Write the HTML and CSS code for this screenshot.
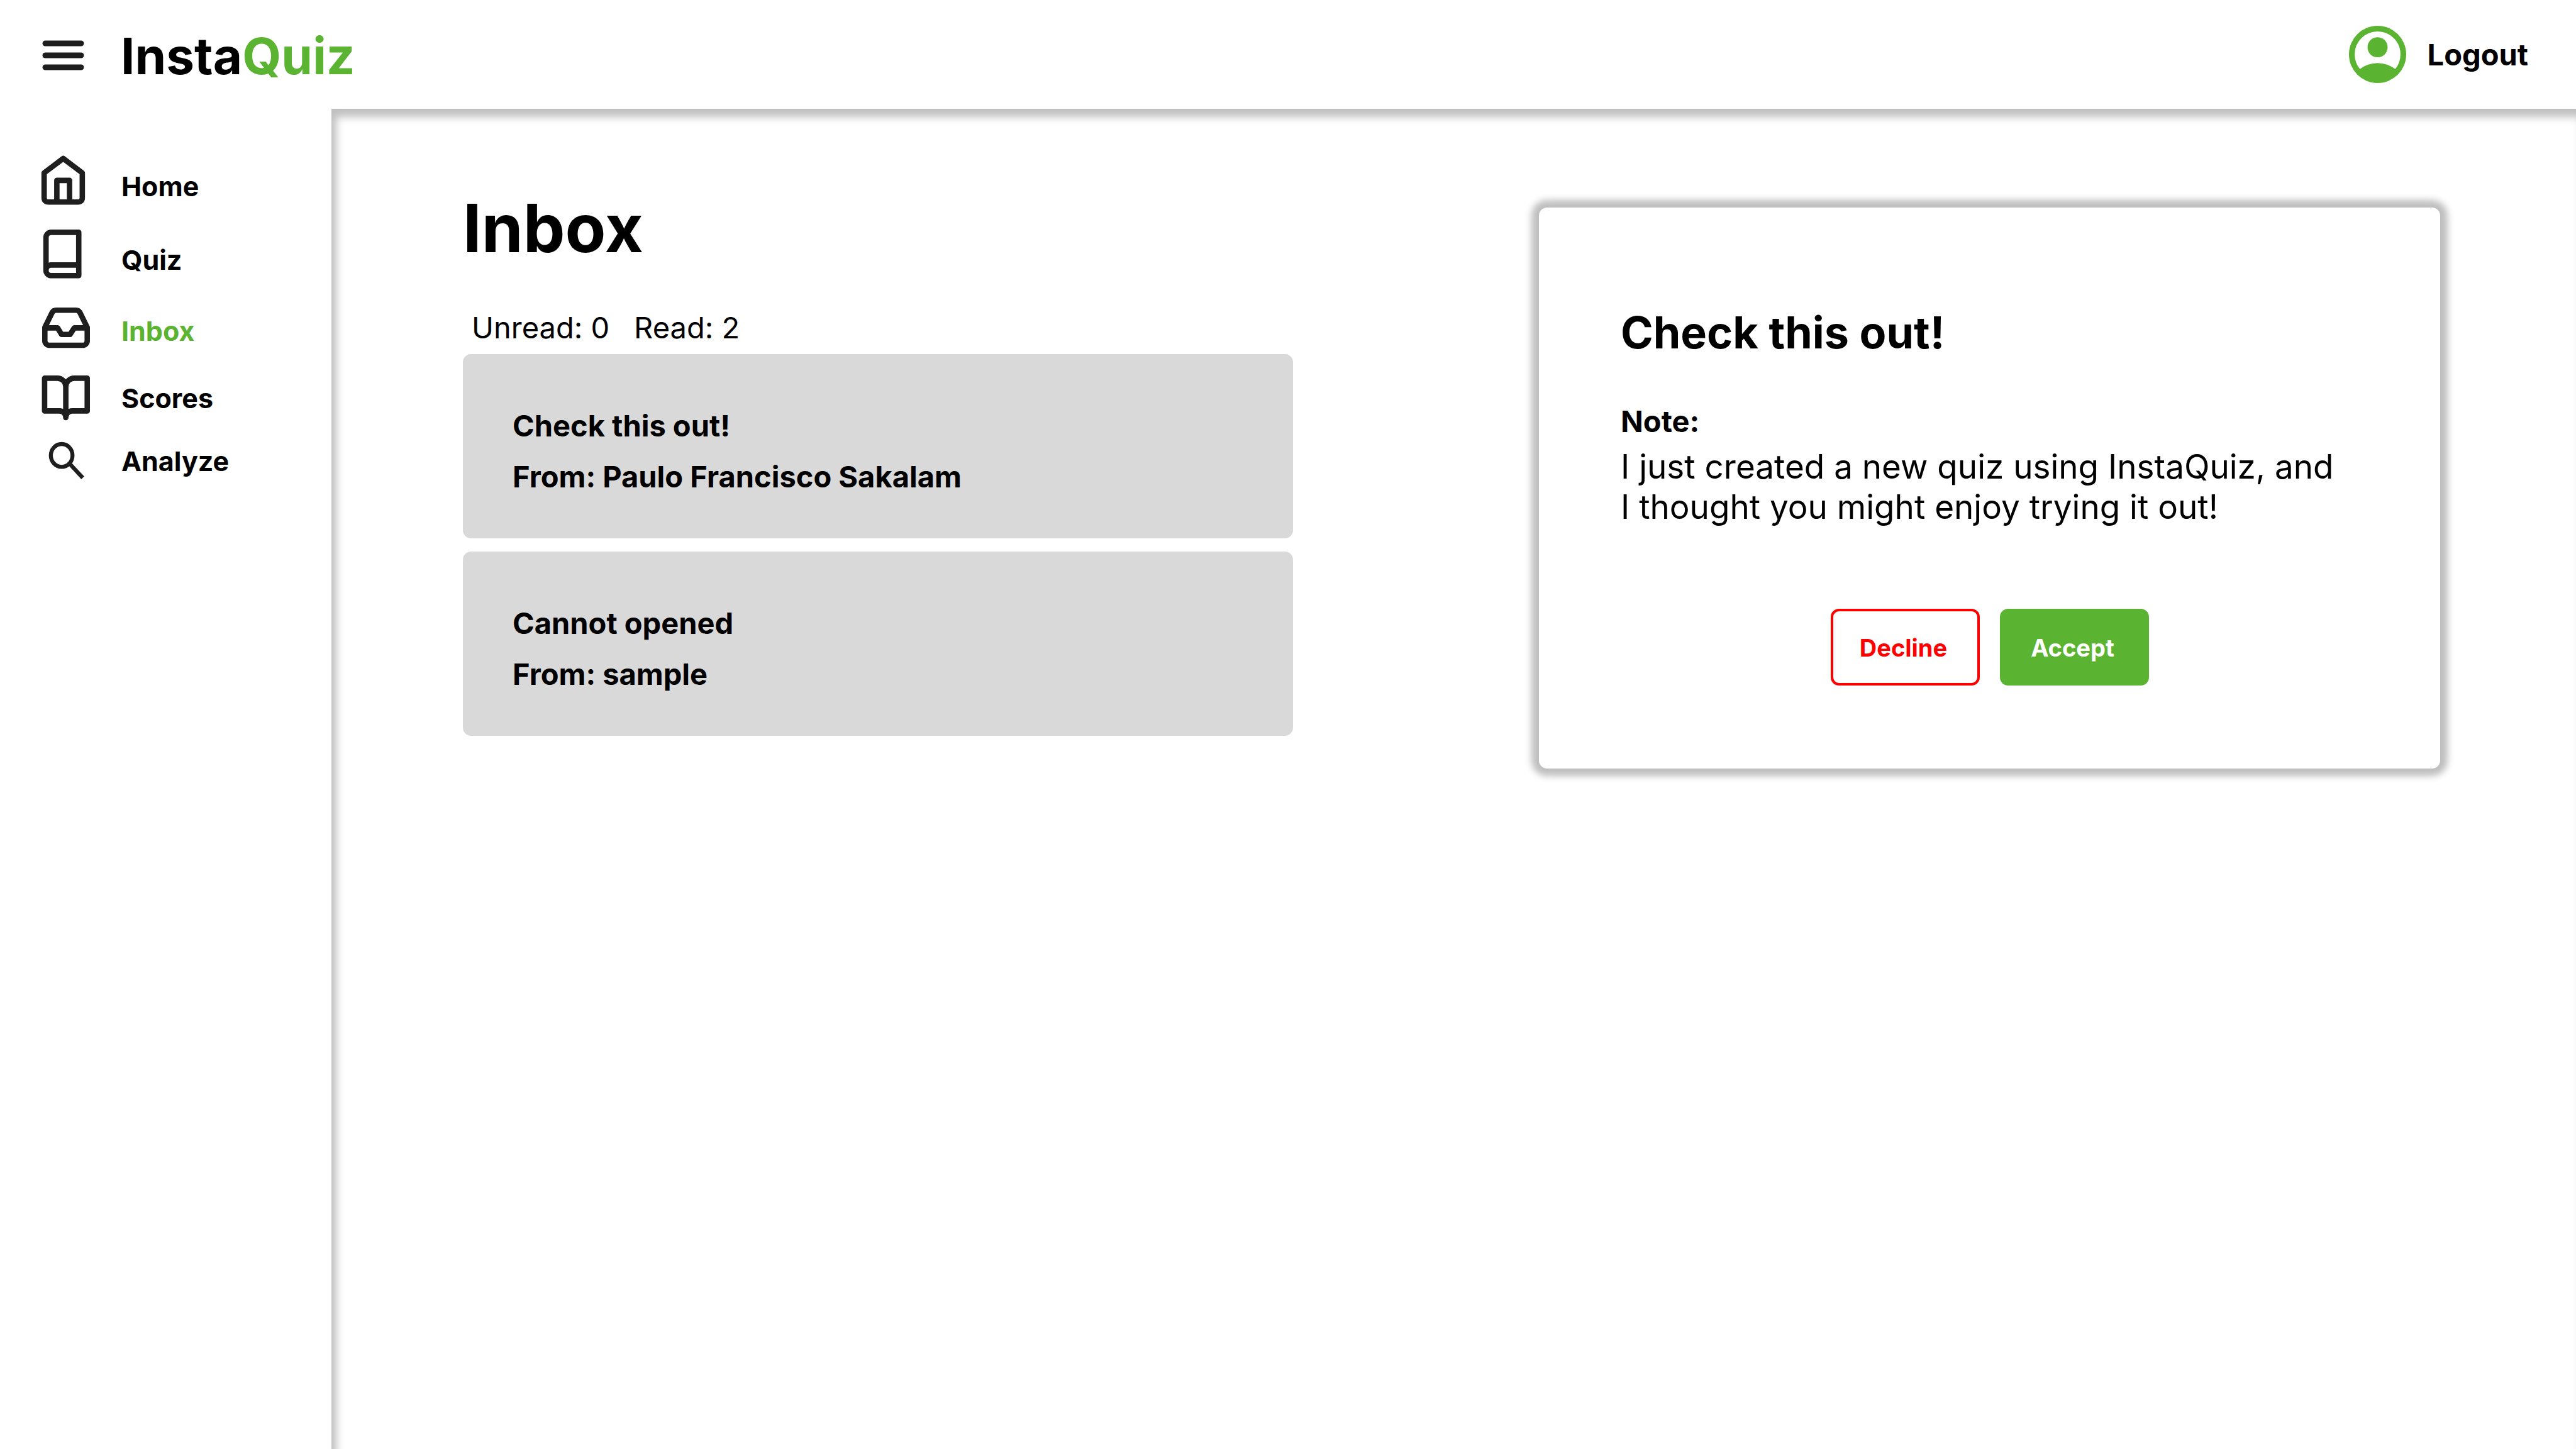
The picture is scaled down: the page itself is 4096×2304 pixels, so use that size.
FILE: index.html
```html
<!DOCTYPE html>
<html lang="en">
<head>
<meta charset="utf-8">
<title>InstaQuiz - Inbox</title>
<link rel="stylesheet" href="styles.css">
</head>
<body>
<div class="app">
  <header class="topbar">
    <button class="menu-button" type="button" aria-label="Menu">
      <svg class="menu-icon" viewBox="0 0 90 90" aria-hidden="true"><path d="M12 27H69M12 46H69M12 65H69"/></svg>
    </button>
    <a class="brand" href="#">Insta<span class="brand-accent">Quiz</span></a>
    <a class="logout" href="#">
      <svg class="avatar" viewBox="2 2 20 20" aria-hidden="true"><path d="M5.85 17.1q1.275-.975 2.85-1.537T12 15t3.3.563 2.85 1.537q.875-1.025 1.363-2.325T20 12q0-3.325-2.337-5.663T12 4T6.337 6.338T4 12q0 1.475.488 2.775T5.85 17.1M12 13q-1.475 0-2.488-1.012T8.5 9.5t1.013-2.488T12 6t2.488 1.013T15.5 9.5t-1.012 2.488T12 13m0 9q-2.075 0-3.9-.788t-3.175-2.137T2.788 15.9T2 12t.788-3.9t2.137-3.175T8.1 2.788T12 2t3.9.788t3.175 2.137T21.213 8.1T22 12t-.788 3.9t-2.137 3.175t-3.175 2.138T12 22"/></svg>
      Logout
    </a>
  </header>

  <nav class="sidebar" aria-label="Main">
    <a class="nav-item" href="#">
      <svg class="nav-icon" viewBox="160 88 240 267" aria-hidden="true"><path d="M187 165L268 104L349 165V270Q349 289 330 289H206Q187 289 187 270ZM241 289V197H295V289"/></svg>
      Home
    </a>
    <a class="nav-item" href="#">
      <svg class="nav-icon" viewBox="160 401 240 267" aria-hidden="true"><path d="M195 579A22 22 0 0 1 217 557H334M217 418H334V602H217A22 22 0 0 1 195 580V440A22 22 0 0 1 217 418Z"/></svg>
      Quiz
    </a>
    <a class="nav-item is-active" href="#" aria-current="page">
      <svg class="nav-icon" viewBox="160 703 240 267" aria-hidden="true"><path d="M370 824H315L297 852H261L244 824H190M221 759L190 822V879A19 19 0 0 0 208 898H351A19 19 0 0 0 370 879V822L339 759Q334 749 322 749H238Q226 749 221 759Z"/></svg>
      Inbox
    </a>
    <a class="nav-item" href="#">
      <svg class="nav-icon" viewBox="160 988 240 267" aria-hidden="true"><path d="M189 1037H243A36 36 0 0 1 279 1073V1204A27 27 0 0 0 252 1176H189ZM370 1037H315A36 36 0 0 0 279 1073V1204A27 27 0 0 1 306 1176H370Z"/></svg>
      Scores
    </a>
    <a class="nav-item" href="#">
      <svg class="nav-icon nav-icon-search" viewBox="160 1256 240 267" aria-hidden="true"><ellipse cx="261.500" cy="1366" rx="46" ry="48.500"/><path d="M296 1402L351 1461"/></svg>
      Analyze
    </a>
  </nav>

  <main class="content">
    <section class="inbox">
      <h1 class="page-title">Inbox</h1>
      <div class="counters"><span>Unread: 0</span><span>Read: 2</span></div>
      <ul class="messages">
        <li><a class="message" href="#"><span>Check this out!</span><span>From: Paulo Francisco Sakalam</span></a></li>
        <li><a class="message" href="#"><span>Cannot opened</span><span>From: sample</span></a></li>
      </ul>
    </section>

    <article class="detail">
      <h2 class="detail-title">Check this out!</h2>
      <h3 class="note-label">Note:</h3>
      <p class="note-text">I just created a new quiz using InstaQuiz, and<br>I thought you might enjoy trying it out!</p>
      <div class="actions">
        <button class="button button-decline" type="button">Decline</button>
        <button class="button button-accept" type="button">Accept</button>
      </div>
    </article>
  </main>
</div>
</body>
</html>
```

FILE: styles.css
```css
:root {
  --green: #5bb431;
  --red: #ff0000;
  --ink: #1e1e1e;
  --card: #d9d9d9;
  --shade: #bfbfbf;
}

* {
  box-sizing: border-box;
  margin: 0;
  padding: 0;
}

body {
  background: #fff;
  color: #000;
  font-family: Inter, "Liberation Sans", sans-serif;
  font-size: 47px;
  line-height: 57px;
}

a {
  color: inherit;
  text-decoration: none;
}

button {
  border: 0;
  background: none;
  color: inherit;
  font: inherit;
}

.app {
  display: grid;
  grid-template-columns: 527px 1fr;
  grid-template-rows: 173px 1fr;
  min-height: 100vh;
}

/* Top bar */

.topbar {
  grid-column: 1 / -1;
  display: flex;
  align-items: center;
  padding: 0 76px 0 60px;
}

.menu-button {
  display: flex;
  margin-right: 42px;
}

.menu-icon {
  width: 90px;
  height: 90px;
  fill: none;
  stroke: var(--ink);
  stroke-width: 9;
  stroke-linecap: round;
}

.brand {
  font-size: 80px;
  font-weight: 700;
  line-height: 96px;
  padding-top: 4px;
}

.brand-accent {
  color: var(--green);
}

.logout {
  display: flex;
  align-items: center;
  gap: 34px;
  margin-left: auto;
  font-weight: 700;
}

.avatar {
  width: 91px;
  height: 91px;
  fill: var(--green);
}

/* Sidebar */

.sidebar {
  display: grid;
  grid-template-rows: 122px 112px 114px 100px 100px;
  align-content: start;
  padding: 62px 0 0 60px;
}

.nav-item {
  display: flex;
  align-items: center;
  gap: 43px;
  font-size: 43px;
  font-weight: 700;
}

.nav-item.is-active {
  color: var(--green);
}

.nav-icon {
  width: 90px;
  height: 100px;
  fill: none;
  stroke: var(--ink);
  stroke-width: 23;
  stroke-linecap: round;
  stroke-linejoin: round;
}

.nav-icon-search {
  stroke-width: 17;
  stroke-linecap: butt;
}

/* Content */

.content {
  display: grid;
  grid-template-columns: 1320fr 1433fr;
  column-gap: 391px;
  align-items: start;
  padding: 125px 216px 125px 209px;
  box-shadow: inset 8px 13px 13px rgba(0, 0, 0, 0.25);
}

.page-title {
  margin-bottom: 65px;
  font-size: 106px;
  font-weight: 700;
  line-height: 129px;
}

.counters {
  display: flex;
  gap: 39px;
  margin-bottom: 14px;
  padding-left: 14px;
}

.messages {
  display: grid;
  gap: 21px;
  list-style: none;
}

.message {
  display: grid;
  padding: 73px 79px 58px;
  border-radius: 13px;
  background: var(--card);
  font-weight: 700;
  line-height: 81px;
}

.detail {
  margin-top: 32px;
  padding: 158px 130px 132px;
  border-radius: 13px;
  background: #fff;
  box-shadow: 0 0 11px 12px var(--shade);
}

.detail-title {
  margin-bottom: 71px;
  font-size: 70px;
  font-weight: 700;
  line-height: 82px;
}

.note-label {
  margin-bottom: 12px;
  font-size: 47px;
  font-weight: 700;
}

.note-text {
  margin-bottom: 130px;
  font-size: 53px;
  line-height: 64px;
}

.actions {
  display: flex;
  justify-content: center;
  gap: 32px;
}

.button {
  width: 237px;
  height: 122px;
  padding: 3px 5px 0 0;
  border-radius: 13px;
  font-size: 38px;
  font-weight: 700;
}

.button-decline {
  border: 4px solid var(--red);
  color: var(--red);
}

.button-accept {
  background: var(--green);
  color: #fff;
}
```
